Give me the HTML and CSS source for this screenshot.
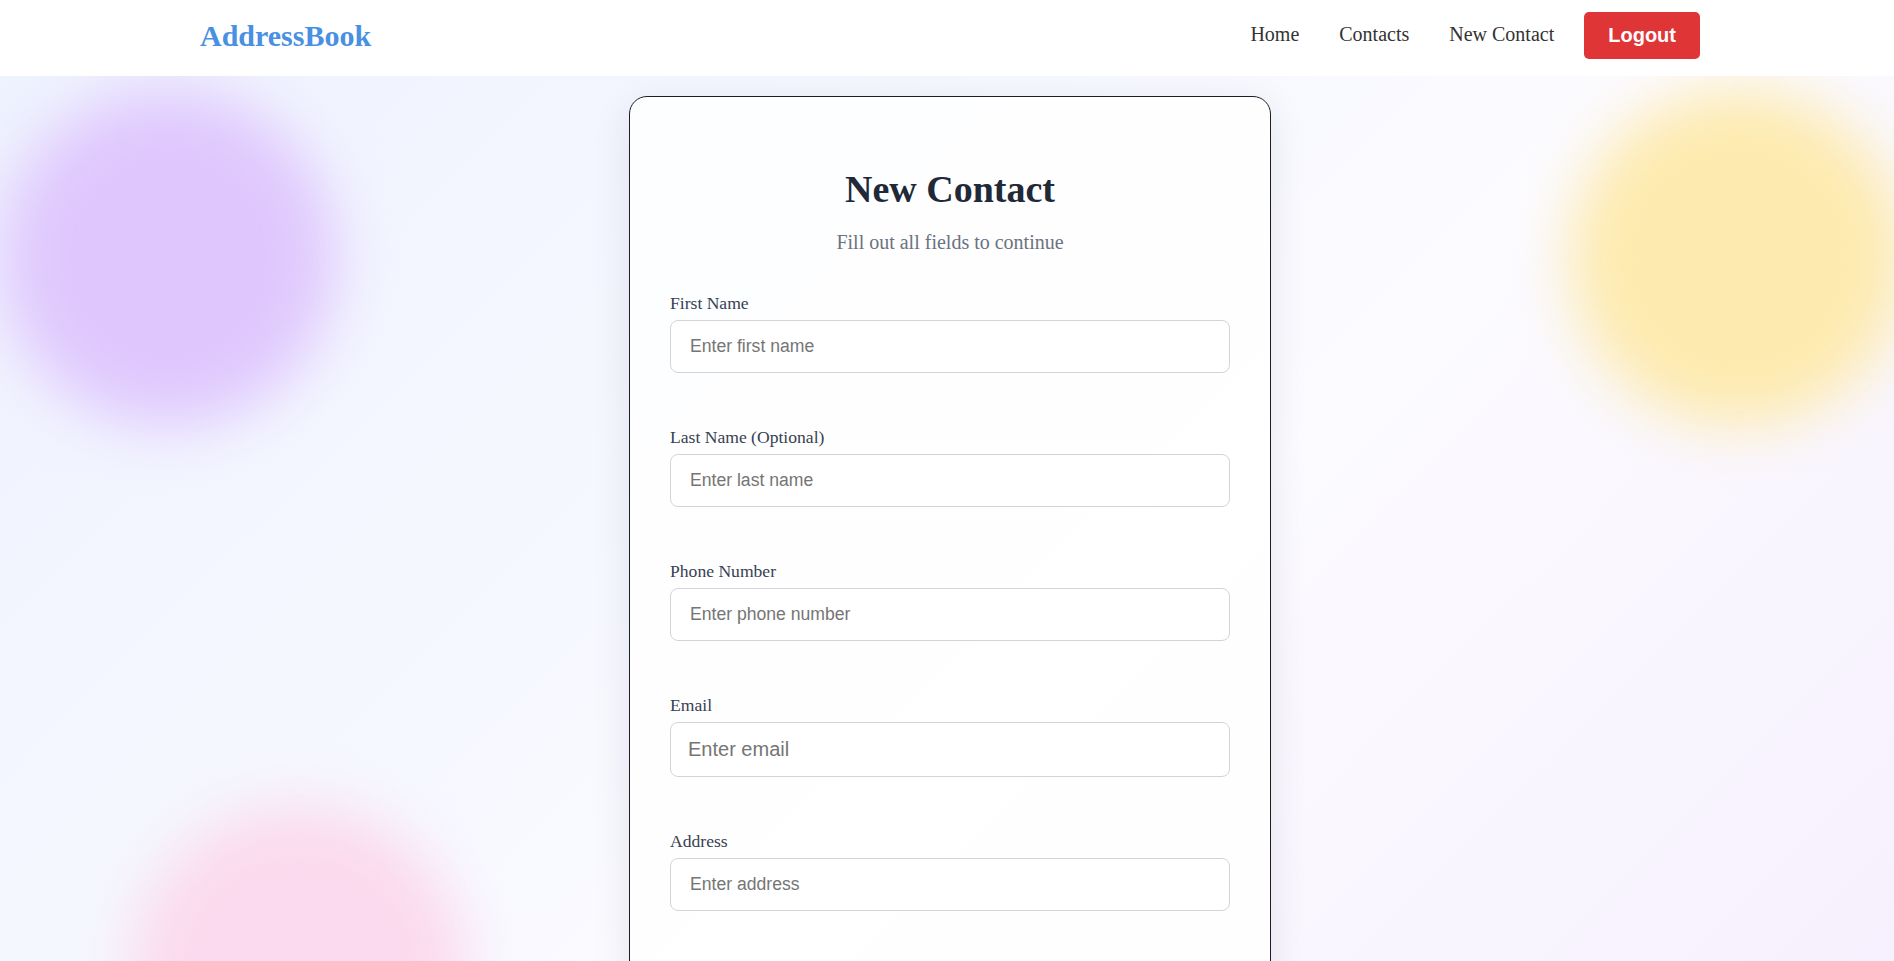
FILE: index.html
```html
<!DOCTYPE html>
<html lang="en">
<head>
<meta charset="utf-8">
<title>AddressBook - New Contact</title>
<link rel="stylesheet" href="styles.css">
</head>
<body>
  <div class="backdrop" aria-hidden="true">
    <span class="blob blob--purple"></span>
    <span class="blob blob--yellow"></span>
    <span class="blob blob--pink"></span>
  </div>

  <header class="site-header">
    <div class="header-inner">
      <a class="logo" href="#">AddressBook</a>
      <nav class="nav">
        <div class="nav-links">
          <a class="nav-link" href="#">Home</a>
          <a class="nav-link" href="#">Contacts</a>
          <a class="nav-link" href="#">New Contact</a>
        </div>
        <button class="logout-btn" type="button">Logout</button>
      </nav>
    </div>
  </header>

  <main class="main">
    <section class="card">
      <h1 class="card-title">New Contact</h1>
      <p class="card-subtitle">Fill out all fields to continue</p>
      <form class="contact-form">
        <div class="form-group">
          <label class="form-label" for="first">First Name</label>
          <input class="form-input" id="first" type="text" placeholder="Enter first name">
        </div>
        <div class="form-group">
          <label class="form-label" for="last">Last Name (Optional)</label>
          <input class="form-input" id="last" type="text" placeholder="Enter last name">
        </div>
        <div class="form-group">
          <label class="form-label" for="phone">Phone Number</label>
          <input class="form-input" id="phone" type="tel" placeholder="Enter phone number">
        </div>
        <div class="form-group">
          <label class="form-label" for="email">Email</label>
          <input class="form-input form-input--email" id="email" type="email" placeholder="Enter email">
        </div>
        <div class="form-group">
          <label class="form-label" for="address">Address</label>
          <input class="form-input" id="address" type="text" placeholder="Enter address">
        </div>
      </form>
    </section>
  </main>
</body>
</html>
```
FILE: styles.css
```css
* {
  box-sizing: border-box;
}

html, body {
  margin: 0;
  padding: 0;
}

body {
  min-height: 100vh;
  font-family: "Liberation Serif", "Times New Roman", serif;
  background: linear-gradient(135deg, #eef2fe 0%, #f6f8ff 40%, #fcfbff 60%, #f6f0fe 100%);
  overflow: hidden;
  position: relative;
}

/* decorative blurred circles behind the content */
.backdrop {
  position: absolute;
  inset: 0;
  overflow: hidden;
  z-index: 0;
}

.blob {
  position: absolute;
  width: 336px;
  height: 336px;
  border-radius: 50%;
  filter: blur(30px);
}

.blob--purple {
  left: 0;
  top: 90px;
  background: #dfc7fd;
}

.blob--yellow {
  left: 1570px;
  top: 90px;
  background: #fdeaae;
}

.blob--pink {
  left: 131px;
  top: 806px;
  background: #fbd9ee;
}

/* header */
.site-header {
  position: relative;
  z-index: 2;
  background: #ffffff;
  padding: 12px 0 17px;
}

.header-inner {
  width: 1500px;
  margin-left: calc(50% - 747px);
  display: flex;
  align-items: center;
  justify-content: space-between;
  height: 47px;
}

.logo {
  font-family: "Liberation Serif", "Times New Roman", serif;
  font-weight: 700;
  font-size: 30px;
  color: #4a90e2;
  text-decoration: none;
}

.nav {
  display: flex;
  align-items: center;
}

.nav-links {
  display: flex;
  gap: 40px;
  margin-bottom: 2px;
}

.nav-link {
  font-family: "Liberation Serif", "Times New Roman", serif;
  font-size: 20px;
  color: #333333;
  text-decoration: none;
}

.logout-btn {
  margin-left: 30px;
  height: 47px;
  padding: 0 24px;
  border: none;
  border-radius: 5px;
  background: #e03537;
  color: #ffffff;
  font-family: "Liberation Sans", Arial, sans-serif;
  font-weight: 700;
  font-size: 20px;
  cursor: pointer;
}

/* main */
.main {
  position: relative;
  z-index: 1;
  padding-top: 20px;
}

.card {
  width: 642px;
  margin-left: calc(50% - 318px);
  padding: 70px 40px 40px;
  background: rgba(255, 255, 255, 0.82);
  border: 1px solid #1e1e24;
  border-radius: 18px;
  box-shadow: 0 10px 40px rgba(20, 20, 40, 0.09);
}

.card-title {
  margin: 0 0 20px;
  text-align: center;
  font-family: "Liberation Serif", "Times New Roman", serif;
  font-weight: 700;
  font-size: 38px;
  color: #1f2937;
}

.card-subtitle {
  margin: 0 0 39px;
  text-align: center;
  font-size: 20px;
  color: #6b7280;
}

.contact-form {
  display: flex;
  flex-direction: column;
}

.form-group {
  display: flex;
  flex-direction: column;
  margin-bottom: 54px;
}

.form-label {
  font-family: "Liberation Serif", "Times New Roman", serif;
  font-size: 17.6px;
  color: #374151;
  margin-bottom: 6px;
}

.form-input {
  width: 100%;
  height: 53px;
  padding: 0 19px;
  border: 1px solid #d1d5db;
  border-radius: 8px;
  background: #ffffff;
  font-family: "Liberation Sans", Arial, sans-serif;
  font-size: 17.6px;
  color: #111827;
  outline: none;
}

.form-input--email {
  height: 55px;
  padding: 0 17px;
  font-size: 20px;
}

.form-input::placeholder {
  color: #757575;
}
```
